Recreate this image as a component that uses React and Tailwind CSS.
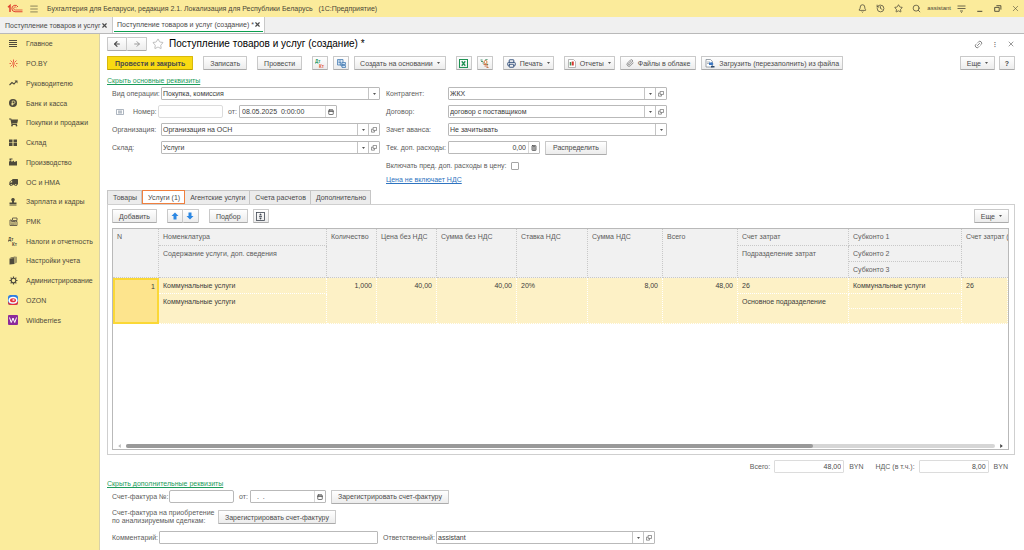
import React from 'react';
import { FaShoppingCart, FaTruck } from 'react-icons/fa';
import {
    ArrowLeft,
    ArrowRight,
    Bell,
    Calculator,
    Calendar,
    History,
    Link2,
    Menu,
    Paperclip,
    Printer,
    Search,
    Star,
    X,
} from 'lucide-react';

const Logo = () => (
    <svg viewBox="0 0 32 18" className="w-4 h-[9px]" aria-label="1С" fill="none" stroke="#e0402f">
        <path d="M2 6.500L6 3v13" strokeWidth="3" />
        <path d="M22 6 A6.500 6.500 0 1 0 16 15.500 H31" strokeWidth="2" />
        <path d="M19 7.500 A3 3 0 1 0 16.500 12 H31" strokeWidth="1.600" />
    </svg>
);

const SparkIcon = () => (
    <svg viewBox="0 0 18 18" className="w-[9px] h-[9px]" fill="none" stroke="#e8543c" strokeWidth="1.800">
        <path d="M9 1v5M9 12v5M1 9h3M14 9h3M3 3l4 4M15 3l-4 4M3 15l4-4M15 15l-4-4" />
        <circle cx="9" cy="9" r="1.500" />
    </svg>
);

const LinesIcon = () => (
    <svg viewBox="0 0 8 8" className="w-2 h-2" stroke="#4e4a3c" strokeWidth="1">
        <path d="M0 0.500h8M0 2.500h8M0 4.500h8M0 6.500h8" />
    </svg>
);

const TrendIcon = () => (
    <svg viewBox="0 0 18 16" className="w-[9px] h-2" fill="none" stroke="#4e4a3c" strokeWidth="2.200">
        <path d="M1 12l5-5 4 3 5-6" />
        <path d="M11 3h6v6z" fill="#4e4a3c" stroke="none" />
    </svg>
);

const RubleIcon = () => (
    <svg viewBox="0 0 16 16" className="w-2 h-2" fill="none">
        <circle cx="8" cy="8" r="8" fill="#4e4a3c" />
        <path d="M6.500 13V4h3a2.300 2.300 0 0 1 0 5H5M5 11h4" stroke="#fbec9c" strokeWidth="1.500" />
    </svg>
);

const StoreIcon = () => (
    <svg viewBox="0 0 16 16" className="w-2 h-2" fill="#4e4a3c">
        <path d="M0 1h7v6H0zM9 1h7v6H9zM0 8h7v6H0zM9 8h7v6H9z" />
    </svg>
);

const FactoryIcon = () => (
    <svg viewBox="0 0 16 16" className="w-2 h-2" fill="#4e4a3c">
        <path d="M0 15V7l5-2v3l5-3v3l6-2v9zM1 1h6v2H4v2H1z" />
    </svg>
);

const PersonIcon = () => (
    <svg viewBox="0 0 16 16" className="w-2 h-2" fill="#4e4a3c">
        <path d="M8 0a3.500 3.500 0 0 1 2 6.400V9h5v3H1V9h5V6.400A3.500 3.500 0 0 1 8 0zM1 13h14v2H1z" />
    </svg>
);

const RegisterIcon = () => (
    <svg viewBox="0 0 18 18" className="w-[9px] h-[9px]" fill="none" stroke="#5e5747" strokeWidth="1.800">
        <path d="M7 2h9v5H7zM2 6v11h10V9H5V6zM13 9h3v8h-4" />
        <path d="M4 12h6M4 14.500h6" strokeWidth="1.500" />
    </svg>
);

const BookIcon = () => (
    <svg viewBox="0 0 16 18" className="w-2 h-[9px]" fill="#4e4a3c">
        <path d="M1 5l10-1v12L1 17z" />
        <path d="M3 3l10-2v13l-1 1V3L3 4zM14 1l1 1v11l-1 1z" />
    </svg>
);

const GearIcon = () => (
    <svg viewBox="0 0 18 18" className="w-[9px] h-[9px]" fill="none" stroke="#4e4a3c">
        <circle cx="9" cy="9" r="4.600" strokeWidth="2.200" />
        <path d="M9 1v3M9 14v3M1 9h3M14 9h3M3.300 3.300l2 2M12.700 12.700l2 2M3.300 14.700l2-2M12.700 5.300l2-2" strokeWidth="2.400" />
    </svg>
);

const DtKtIcon = ({ top = '#4e4a3c', bottom = '#4e4a3c' }) => (
    <svg viewBox="0 0 20 18" className="w-[10px] h-[9px]" fontFamily="Liberation Sans, sans-serif" fontWeight="bold" fontSize="9">
        <text x="0" y="8" fill={top}>Дт</text>
        <text x="8" y="17" fill={bottom}>Кт</text>
    </svg>
);

const OzonIcon = () => (
    <svg viewBox="0 0 20 20" className="w-[10px] h-[10px]">
        <rect width="20" height="20" rx="5" fill="#2f7de0" />
        <path d="M0 13c3 6 15 6 20-1v3a5 5 0 0 1-5 5H5a5 5 0 0 1-5-5z" fill="#e5323c" />
        <ellipse cx="10" cy="10.500" rx="9" ry="7" fill="#fff" />
        <ellipse cx="10" cy="10.500" rx="6" ry="4.200" fill="#e5323c" />
        <ellipse cx="11" cy="10" rx="2.500" ry="1.300" fill="#fff" />
    </svg>
);

const WbIcon = () => (
    <svg viewBox="0 0 20 20" className="w-[10px] h-[10px]">
        <rect width="20" height="20" rx="2" fill="#8c2a9b" />
        <path d="M3 5l3.500 10L10 6l3.500 9L17 5" fill="none" stroke="#fff" strokeWidth="2" />
    </svg>
);

const OpenIcon = () => (
    <svg viewBox="0 0 14 14" className="w-[6px] h-[6px]" fill="none" stroke="#666" strokeWidth="1.600">
        <path d="M5 1h8v7H5zM5 5H1v7h7V8" />
    </svg>
);

const TreeIcon = () => (
    <svg viewBox="0 0 18 18" className="w-[9px] h-[9px]" fill="none" stroke="#4a7fb5" strokeWidth="1.600">
        <path d="M1 1h11v11H1z" fill="#dbe8f4" />
        <path d="M3 4h5M3 7h5v7h3M5 10h3" />
        <path d="M10 7h7v4h-7zM10 13h7v4h-7z" fill="#cfe2f3" />
    </svg>
);

const ExcelIcon = () => (
    <svg viewBox="0 0 18 18" className="w-[9px] h-[9px]" fill="none" stroke="#1f9254" strokeWidth="2">
        <rect x="1" y="1" width="16" height="16" />
        <path d="M5.500 4.500l7 9M12.500 4.500l-7 9" strokeWidth="2.500" />
    </svg>
);

const LogIcon = () => (
    <svg viewBox="0 0 18 18" className="w-[9px] h-[9px]" fill="none" strokeWidth="1.800">
        <path d="M1 2h4M2 5h4M5 8h4" stroke="#3d8b62" />
        <circle cx="11" cy="6" r="3" stroke="#e07a3a" />
        <path d="M7 11h9M9 14h7M13 17h4" stroke="#c7683a" />
        <path d="M10 2l5-1M14 9l2 3" stroke="#3d8b62" />
    </svg>
);

const ReportIcon = () => (
    <svg viewBox="0 0 16 18" className="w-2 h-[9px]">
        <path d="M1 1h10l4 4v12H1z" fill="#fff" stroke="#a0a0a0" strokeWidth="1.500" />
        <path d="M5 6v7" stroke="#3a8a4f" strokeWidth="3" />
        <path d="M9.500 5v8" stroke="#d5392f" strokeWidth="4" />
    </svg>
);

const LoadIcon = () => (
    <svg viewBox="0 0 20 18" className="w-[10px] h-[9px]" fill="none">
        <path d="M2 1h9l4 4v11H2z" fill="#fff" stroke="#7d8790" strokeWidth="1.500" />
        <path d="M4 6h6M4 9h4" stroke="#7d8790" strokeWidth="1.200" />
        <path d="M8 7l5 0v-2l4 5-4 4v-2H8z" fill="#3b77c2" />
        <path d="M12 14h7v3h-7z" fill="#2d4a6b" />
    </svg>
);

const ExpandIcon = () => (
    <svg viewBox="0 0 18 18" className="w-[9px] h-[9px]" fill="none" stroke="#3f4652" strokeWidth="1.600">
        <rect x="1" y="1" width="16" height="16" />
        <path d="M9 3.500v3M9 11.500v3M6 9h6" />
        <path d="M6 6.500L9 3l3 3.500zM6 11.500L9 15l3-3.500z" fill="#3f4652" stroke="none" />
    </svg>
);

const MoveIcon = ({ down }) => (
    <svg viewBox="0 0 16 16" className={down ? 'w-2 h-2 rotate-180' : 'w-2 h-2'}>
        <path d="M8 1l7 7h-4v7H5V8H1z" fill="#2b87e3" />
    </svg>
);

const Caret = () => (
    <svg viewBox="0 0 6 4" className="w-[3px] h-[2px]">
        <path d="M0 0h6L3 4z" fill="#555" />
    </svg>
);

const NAV = [
    ['Главное', <LinesIcon />],
    ['PO.BY', <SparkIcon />],
    ['Руководителю', <TrendIcon />],
    ['Банк и касса', <RubleIcon />],
    ['Покупки и продажи', <FaShoppingCart />],
    ['Склад', <StoreIcon />],
    ['Производство', <FactoryIcon />],
    ['ОС и НМА', <FaTruck className="-scale-x-100" />],
    ['Зарплата и кадры', <PersonIcon />],
    ['РМК', <RegisterIcon />],
    ['Налоги и отчетность', <DtKtIcon />],
    ['Настройки учета', <BookIcon />],
    ['Администрирование', <GearIcon />],
    ['OZON', <OzonIcon />],
    ['Wildberries', <WbIcon />],
];

const Btn = ({ children, size = 'px-[6px]', look = 'border-[#c9c9c9] border-b-[#ababab] bg-linear-to-b from-white to-[#ececec]', className = '', ...rest }) => (
    <button
        type="button"
        className={`h-[14px] shrink-0 flex items-center justify-center gap-1 whitespace-nowrap rounded-[1px] border text-[#4a4a4a] ${size} ${look} ${className}`}
        {...rest}
    >
        {children}
    </button>
);

const Combo = ({ id, value, open }) => (
    <div className="flex-1 min-w-0 h-[13px] flex border border-[#b9b9b9] rounded-[1px] bg-white">
        <div className="relative flex-1 min-w-0 flex">
            <select id={id} className="appearance-none w-full pl-px pr-3 text-[#3c3c3c]" defaultValue={value}>
                <option>{value}</option>
            </select>
            <span className="absolute inset-y-0 right-0 w-[11px] border-l border-[#c4c4c4] flex items-center justify-center pointer-events-none">
                <Caret />
            </span>
        </div>
        {open && (
            <button type="button" aria-label="Открыть" className="w-[11px] border-l border-[#c4c4c4] flex items-center justify-center">
                <OpenIcon />
            </button>
        )}
    </div>
);

const Picker = ({ id, value, label, icon, className, inputClass = '' }) => (
    <div className={`h-[13px] flex border border-[#b9b9b9] rounded-[1px] bg-white ${className}`}>
        <input id={id} defaultValue={value} className={`flex-1 min-w-0 px-[2px] text-[#3c3c3c] ${inputClass}`} />
        <button type="button" aria-label={label} className="w-[11px] border-l border-[#d8d8d8] flex items-center justify-center text-[#4a4a4a]">
            {icon}
        </button>
    </div>
);

const Label = ({ children, className = 'w-[49px]', ...rest }) => (
    <label className={`shrink-0 whitespace-nowrap text-[#5c5c5c] ${className}`} {...rest}>{children}</label>
);

const Row = ({ children }) => <div className="h-[13px] flex items-center">{children}</div>;

const th = 'pl-1 pt-[3px] text-left align-top font-normal whitespace-nowrap border-r last:border-r-0 border-b border-dotted border-[#c8c8c8]';
const td = 'px-1 pt-[3px] align-top whitespace-nowrap border-r border-b border-dotted border-white';

const TopBar = () => (
    <header className="h-[17px] shrink-0 flex items-center bg-[#fbeb9b] pl-[7px] pr-1 text-[#4a4637]">
        <Logo />
        <button type="button" aria-label="Меню" className="ml-[6px]">
            <Menu className="w-[10px] h-[10px]" strokeWidth={1.5} />
        </button>
        <span className="ml-2 whitespace-nowrap">
            Бухгалтерия для Беларуси, редакция 2.1. Локализация для Республики Беларусь&nbsp;&nbsp; (1С:Предприятие)
        </span>
        <div className="ml-auto flex items-center gap-[9px]">
            <button type="button" aria-label="Уведомления"><Bell className="w-[9px] h-[9px]" /></button>
            <button type="button" aria-label="История"><History className="w-[9px] h-[9px]" /></button>
            <button type="button" aria-label="Избранное"><Star className="w-[9px] h-[9px]" /></button>
            <button type="button" aria-label="Поиск"><Search className="w-[9px] h-[9px]" /></button>
            <span className="text-[6px] -mx-[3px]">assistant</span>
            <button type="button" aria-label="Настройки">
                <svg viewBox="0 0 18 16" className="w-[9px] h-2" fill="none" stroke="currentColor" strokeWidth="1.600">
                    <path d="M1 2h16M1 7h16M6 12h6M8 14l1 1 1-1" />
                </svg>
            </button>
            <button type="button" aria-label="Свернуть">
                <svg viewBox="0 0 16 16" className="w-[9px] h-[9px]" stroke="currentColor" strokeWidth="1.800"><path d="M4 13h9" /></svg>
            </button>
            <button type="button" aria-label="Восстановить">
                <svg viewBox="0 0 16 16" className="w-[9px] h-[9px]" fill="none" stroke="currentColor" strokeWidth="1.600">
                    <path d="M6 3h8v7M3 6h8v7H3z" />
                </svg>
            </button>
            <button type="button" aria-label="Закрыть"><X className="w-[9px] h-[9px]" strokeWidth={1.5} /></button>
        </div>
    </header>
);

const WindowTabs = () => (
    <div className="h-[17px] shrink-0 flex bg-[#f0f0f0] border-b border-[#b9b9b9] text-[#4a4a4a]">
        <div className="w-[113px] flex items-center justify-between pl-[5px] pr-1 border-r border-[#c9c9c9]">
            <span className="whitespace-nowrap">Поступление товаров и услуг</span>
            <button type="button" aria-label="Закрыть вкладку"><X className="w-[7px] h-[7px]" strokeWidth={4} /></button>
        </div>
        <div className="w-[152px] flex flex-col px-px bg-white border-r border-[#c9c9c9]">
            <div className="h-[14px] pt-px flex items-center justify-between px-[3px]">
                <span className="whitespace-nowrap">Поступление товаров и услуг (создание) *</span>
                <button type="button" aria-label="Закрыть вкладку"><X className="w-[7px] h-[7px]" strokeWidth={4} /></button>
            </div>
            <div className="h-px bg-[#0c9f4f]"></div>
        </div>
    </div>
);

const Sidebar = () => (
    <aside className="w-[100px] shrink-0 bg-[#fbec9c] border-r border-[#d9d2a8]">
        <nav className="h-[296px] flex flex-col">
            {NAV.map(([name, icon]) => (
                <a key={name} href="#" className="flex-1 flex items-center pl-2 text-[#4e4a3c]">
                    <span className="w-[10px] mr-2 flex justify-center text-[9px]">{icon}</span>
                    {name}
                </a>
            ))}
        </nav>
    </aside>
);

const Toolbar = () => (
    <div className="mt-[2px] flex gap-[10px]">
        <Btn size="px-[7px]" look="bg-[#f9da12] border-[#d8b90c] border-b-[#b99c00]" className="font-bold">Провести и закрыть</Btn>
        <Btn>Записать</Btn>
        <Btn>Провести</Btn>
        <div className="flex gap-[5px]">
            <Btn size="w-4" aria-label="Проводки"><DtKtIcon top="#2f9b63" bottom="#e2573c" /></Btn>
            <Btn size="w-4" aria-label="Структура"><TreeIcon /></Btn>
            <Btn size="px-[5px]">Создать на основании <Caret /></Btn>
        </div>
        <div className="flex gap-[5px]">
            <Btn size="w-4" aria-label="Excel"><ExcelIcon /></Btn>
            <Btn size="w-4" aria-label="Журнал"><LogIcon /></Btn>
        </div>
        <Btn size="px-[3px]"><Printer className="w-[9px] h-[9px] text-[#33517c]" strokeWidth={2.5} />Печать <Caret /></Btn>
        <div className="flex gap-[5px]">
            <Btn size="px-[3px]"><ReportIcon />Отчеты <Caret /></Btn>
            <Btn size="px-[5px]"><Paperclip className="w-2 h-2 text-[#666]" />Файлы в облаке</Btn>
            <Btn size="px-[3px]"><LoadIcon />Загрузить (перезаполнить) из файла</Btn>
        </div>
        <div className="ml-auto flex gap-1">
            <Btn>Еще <Caret /></Btn>
            <Btn size="w-4" className="font-bold">?</Btn>
        </div>
    </div>
);

const MainFields = () => (
    <div className="mt-[2px] pl-[5px] flex gap-[6px]">
        <div className="w-[268px] flex flex-col gap-[5px]">
            <Row>
                <Label htmlFor="op">Вид операции:</Label>
                <Combo id="op" value="Покупка, комиссия" />
            </Row>
            <Row>
                <svg viewBox="0 0 16 12" className="w-2 h-[6px] ml-1 mr-[9px]" fill="none" stroke="#8b97a5" strokeWidth="1.400">
                    <path d="M1 1h14v10H1zM4 4h8M4 6h8M4 8h8" />
                </svg>
                <Label htmlFor="num" className="w-[25px]">Номер:</Label>
                <input id="num" className="w-[65px] h-[13px] border border-[#dcdcdc] rounded-[2px] bg-white" />
                <Label htmlFor="date" className="ml-[5px] w-[11px]">от:</Label>
                <Picker id="date" value="08.05.2025  0:00:00" label="Календарь" icon={<Calendar className="w-[6px] h-[6px]" strokeWidth={3} />} className="w-[98px]" inputClass="whitespace-pre" />
            </Row>
            <Row>
                <Label htmlFor="org">Организация:</Label>
                <Combo id="org" value="Организация на ОСН" open />
            </Row>
            <Row>
                <Label htmlFor="store">Склад:</Label>
                <Combo id="store" value="Услуги" open />
            </Row>
        </div>
        <div className="w-[281px] flex flex-col gap-[5px]">
            <Row>
                <Label htmlFor="agent" className="w-[62px]">Контрагент:</Label>
                <Combo id="agent" value="ЖКХ" open />
            </Row>
            <Row>
                <Label htmlFor="contract" className="w-[62px]">Договор:</Label>
                <Combo id="contract" value="договор с поставщиком" open />
            </Row>
            <Row>
                <Label htmlFor="advance" className="w-[62px]">Зачет аванса:</Label>
                <Combo id="advance" value="Не зачитывать" />
            </Row>
            <Row>
                <Label htmlFor="costs" className="w-[62px]">Тек. доп. расходы:</Label>
                <Picker id="costs" value="0,00" label="Калькулятор" icon={<Calculator className="w-[6px] h-[6px]" strokeWidth={3} />} className="w-[92px]" inputClass="text-right" />
                <Btn size="px-[7px]" className="ml-[5px]">Распределить</Btn>
            </Row>
            <div className="flex flex-col gap-[3px]">
                <Row>
                    <Label htmlFor="incl" className="mr-1">Включать пред. доп. расходы в цену:</Label>
                    <input id="incl" type="checkbox" className="appearance-none w-2 h-2 border border-[#a5a5a5] rounded-[1px] bg-white" />
                </Row>
                <a href="#" className="self-start text-[#2f74c0] underline">Цена не включает НДС</a>
            </div>
        </div>
    </div>
);

const SECTIONS = ['Товары', 'Услуги (1)', 'Агентские услуги', 'Счета расчетов', 'Дополнительно'];

const ServicesTable = () => (
    <div className="flex-1 min-h-[120px] flex flex-col border border-[#b9b9b9] overflow-hidden">
        <table className="w-full table-fixed border-separate border-spacing-0 text-[#444]">
            <colgroup>
                <col className="w-[46px]" />
                <col className="w-[168px]" />
                <col className="w-[50px]" />
                <col className="w-[60px]" />
                <col className="w-[80px]" />
                <col className="w-[71px]" />
                <col className="w-[75px]" />
                <col className="w-[75px]" />
                <col className="w-[111px]" />
                <col className="w-[113px]" />
                <col />
            </colgroup>
            <thead className="bg-[#f1f1f1] text-[#5c5c5c]">
                <tr className="h-[17px]">
                    <th rowSpan={3} className={th}>N</th>
                    <th className={th}>Номенклатура</th>
                    <th rowSpan={3} className={th}>Количество</th>
                    <th rowSpan={3} className={th}>Цена без НДС</th>
                    <th rowSpan={3} className={th}>Сумма без НДС</th>
                    <th rowSpan={3} className={th}>Ставка НДС</th>
                    <th rowSpan={3} className={th}>Сумма НДС</th>
                    <th rowSpan={3} className={th}>Всего</th>
                    <th className={th}>Счет затрат</th>
                    <th className="pl-1 pt-[3px] text-left align-top font-normal border-r border-b border-dotted border-[#c8c8c8]">Субконто 1</th>
                    <th rowSpan={3} className={th}>Счет затрат (</th>
                </tr>
                <tr className="h-4">
                    <th rowSpan={2} className={th}>Содержание услуги, доп. сведения</th>
                    <th rowSpan={2} className={th}>Подразделение затрат</th>
                    <th className="pl-1 pt-[3px] text-left align-top font-normal border-r border-b border-dotted border-[#c8c8c8]">Субконто 2</th>
                </tr>
                <tr className="h-4">
                    <th className="pl-1 pt-[3px] text-left align-top font-normal border-r border-b border-dotted border-[#c8c8c8]">Субконто 3</th>
                </tr>
            </thead>
            <tbody className="bg-[#fdf1c6] text-[#3c3c3c]">
                <tr className="h-4">
                    <td rowSpan={3} className="px-[2px] pt-[2px] align-top text-right bg-[#fde48d] border-2 border-[#fbd836]">1</td>
                    <td className={td}>Коммунальные услуги</td>
                    <td rowSpan={3} className={`${td} text-right`}>1,000</td>
                    <td rowSpan={3} className={`${td} text-right`}>40,00</td>
                    <td rowSpan={3} className={`${td} text-right`}>40,00</td>
                    <td rowSpan={3} className={td}>20%</td>
                    <td rowSpan={3} className={`${td} text-right`}>8,00</td>
                    <td rowSpan={3} className={`${td} text-right`}>48,00</td>
                    <td className={td}>26</td>
                    <td className={td}>Коммунальные услуги</td>
                    <td rowSpan={3} className={td}>26</td>
                </tr>
                <tr className="h-[15px]">
                    <td rowSpan={2} className={td}>Коммунальные услуги</td>
                    <td rowSpan={2} className={td}>Основное подразделение</td>
                    <td className={td}></td>
                </tr>
                <tr className="h-[15px]">
                    <td className={td}></td>
                </tr>
            </tbody>
        </table>
        <div className="mt-auto h-[7px] px-[5px] flex items-center gap-[5px]">
            <svg viewBox="0 0 4 6" className="w-[3px] h-1"><path d="M4 0v6L0 3z" fill="#bbb" /></svg>
            <div className="flex-1 h-1 rounded-full bg-[#d6d6d6]">
                <div className="w-[79%] h-1 rounded-full bg-[#999]"></div>
            </div>
            <svg viewBox="0 0 4 6" className="w-[3px] h-1"><path d="M0 0v6l4-3z" fill="#444" /></svg>
        </div>
    </div>
);

const Services = () => (
    <section className="mt-[6px] flex-1 flex flex-col">
        <div role="tablist" className="flex h-[14px]">
            {SECTIONS.map((name, i) => (
                <button
                    key={name}
                    type="button"
                    role="tab"
                    aria-selected={i === 1}
                    className={
                        i === 1
                            ? 'pl-[5px] pr-1 bg-white border border-[#f0803f] text-[#4a4a4a]'
                            : 'pl-[5px] pr-1 bg-[#ececec] border border-b-0 border-l-0 first:border-l border-[#c6c6c6] text-[#4a4a4a]'
                    }
                >
                    {name}
                </button>
            ))}
        </div>
        <div className="flex-1 flex flex-col gap-[5px] p-1 pr-[5px] border border-[#cfcfcf]">
            <div className="flex gap-[10px]">
                <Btn>Добавить</Btn>
                <div className="flex">
                    <Btn size="w-4" aria-label="Вверх"><MoveIcon /></Btn>
                    <Btn size="w-4" aria-label="Вниз" className="border-l-0"><MoveIcon down /></Btn>
                </div>
                <div className="flex gap-[5px]">
                    <Btn>Подбор</Btn>
                    <Btn size="w-4" aria-label="Развернуть"><ExpandIcon /></Btn>
                </div>
                <Btn className="ml-auto">Еще <Caret /></Btn>
            </div>
            <ServicesTable />
        </div>
    </section>
);

const Totals = () => (
    <div className="mt-[5px] h-[13px] flex items-center justify-end pr-[7px] text-[#5c5c5c]">
        <Label htmlFor="total" className="mr-1">Всего:</Label>
        <input id="total" readOnly defaultValue="48,00" className="w-[70px] h-[13px] px-[2px] text-right border border-[#dcdcdc] rounded-[1px] text-[#4a4a4a]" />
        <span className="ml-[5px] mr-3">BYN</span>
        <Label htmlFor="vat" className="mr-1">НДС (в т.ч.):</Label>
        <input id="vat" readOnly defaultValue="8,00" className="w-[70px] h-[13px] px-[2px] text-right border border-[#dcdcdc] rounded-[1px] text-[#4a4a4a]" />
        <span className="ml-[5px]">BYN</span>
    </div>
);

const ExtraFields = () => (
    <div className="mt-[2px] pl-[5px] flex flex-col gap-[6px]">
        <Row>
            <Label htmlFor="inv" className="w-[57px]">Счет-фактура №:</Label>
            <input id="inv" className="w-[65px] h-[13px] border border-[#b9b9b9] rounded-[2px] bg-white" />
            <Label htmlFor="invdate" className="ml-[5px] w-[11px]">от:</Label>
            <Picker id="invdate" value="  .  ." label="Календарь" icon={<Calendar className="w-[6px] h-[6px]" strokeWidth={3} />} className="w-[76px] mr-[5px]" inputClass="whitespace-pre" />
            <Btn>Зарегистрировать счет-фактуру</Btn>
        </Row>
        <div className="flex items-center">
            <span className="w-[106px] leading-2 text-[#5c5c5c]">Счет-фактура на приобретение<br />по анализируемым сделкам:</span>
            <Btn>Зарегистрировать счет-фактуру</Btn>
        </div>
        <Row>
            <Label htmlFor="comment" className="w-[47px]">Комментарий:</Label>
            <input id="comment" className="w-[219px] h-[13px] border border-[#b9b9b9] rounded-[1px] bg-white" />
            <Label htmlFor="resp" className="ml-[5px] w-[53px]">Ответственный:</Label>
            <div className="w-[219px] flex">
                <Combo id="resp" value="assistant" open />
            </div>
        </Row>
    </div>
);

const App = () => {
    return (
        <div className="min-h-screen flex flex-col bg-white text-[7px] leading-[9px] font-['Liberation_Sans',Arial,sans-serif]">
            <TopBar />
            <WindowTabs />
            <div className="flex-1 flex">
                <Sidebar />
                <main className="flex-1 min-w-0 flex flex-col pl-[7px] pr-[9px] pb-[6px]">
                    <div className="h-5 flex items-center">
                        <div className="flex">
                            <Btn size="w-5" aria-label="Назад"><ArrowLeft className="w-2 h-2" strokeWidth={3.5} /></Btn>
                            <Btn size="w-5" aria-label="Вперед" className="border-l-0"><ArrowRight className="w-2 h-2 text-[#999]" strokeWidth={3} /></Btn>
                        </div>
                        <Star className="w-3 h-3 ml-[5px] text-[#aaa]" strokeWidth={1.5} />
                        <h1 className="ml-[5px] text-[10px] leading-3 text-black">Поступление товаров и услуг (создание) *</h1>
                        <div className="ml-auto flex items-center gap-2 text-[#666]">
                            <button type="button" aria-label="Ссылка"><Link2 className="w-[9px] h-[9px] -rotate-45" /></button>
                            <button type="button" aria-label="Еще" className="w-2 font-bold">⁝</button>
                            <button type="button" aria-label="Закрыть"><X className="w-2 h-2" /></button>
                        </div>
                    </div>
                    <Toolbar />
                    <a href="#" className="mt-[6px] self-start text-[#1c9c5c] underline">Скрыть основные реквизиты</a>
                    <MainFields />
                    <Services />
                    <Totals />
                    <a href="#" className="mt-[6px] self-start text-[#1c9c5c] underline">Скрыть дополнительные реквизиты</a>
                    <ExtraFields />
                </main>
            </div>
        </div>
    );
};

export default App;
